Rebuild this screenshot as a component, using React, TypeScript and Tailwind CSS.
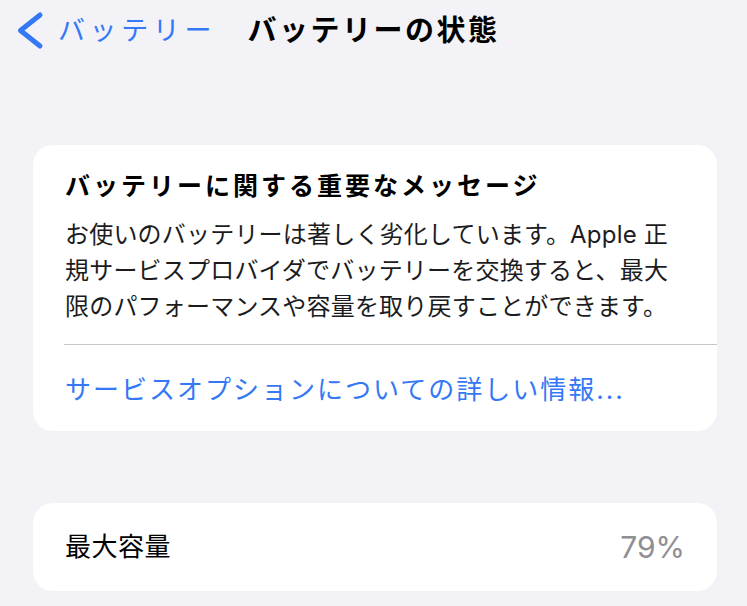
import React from 'react';

const BackChevron: React.FC = () => (
  <svg width="28" height="40" viewBox="0 0 28 40" fill="none" className="shrink-0">
    <path d="M24 5 L4.5 20.5 L24 36" stroke="#3478f6" strokeWidth={5} strokeLinecap="round" strokeLinejoin="round" />
  </svg>
);

const App: React.FC = () => {
  return (
    <div className="min-h-[606px] w-full bg-[#f2f2f7] font-['Inter','Noto_Sans_CJK_JP',sans-serif] text-black">
      {/* Nav bar */}
      <div className="grid h-[60px] grid-cols-[1fr_auto_1fr] items-center">
        <div className="flex items-center pl-4">
          <BackChevron />
          <span className="ml-[14px] whitespace-nowrap text-[27px] leading-none tracking-[4.6px] text-[#3478f6]">
            バッテリー
          </span>
        </div>
        <h1 className="whitespace-nowrap text-[29px] font-bold leading-none tracking-[2.5px]">バッテリーの状態</h1>
        <div />
      </div>

      <div className="flex flex-col pl-[33px] pr-[30px] pt-[85px] pb-[14px]">
        {/* Important message card */}
        <section className="overflow-hidden rounded-[20px] bg-white">
          <div className="pl-[32px] pt-[23px] pb-[19px]">
            <h2 className="whitespace-nowrap text-[25px] font-bold leading-[36px] tracking-[3px]">
              バッテリーに関する重要なメッセージ
            </h2>
            <p className="mt-[13px] whitespace-nowrap text-[24px] leading-[36px] tracking-[0.2px] text-[#1c1c1e]">
              お使いのバッテリーは著しく劣化しています。Apple 正
              <br />
              規サービスプロバイダでバッテリーを交換すると、最大
              <br />
              限のパフォーマンスや容量を取り戻すことができます。
            </p>
          </div>
          <div className="ml-[31px] h-px bg-[#c6c6c8]" />
          <div className="flex h-[86px] items-center pl-[32px] pt-[3px]">
            <span className="whitespace-nowrap text-[26px] leading-none tracking-[2px] text-[#3478f6]">
              サービスオプションについての詳しい情報...
            </span>
          </div>
        </section>

        {/* Maximum capacity */}
        <section className="mt-[72px] flex h-[88px] items-center justify-between rounded-[20px] bg-white pl-[32px] pr-[32px]">
          <span className="whitespace-nowrap text-[26px] leading-none tracking-[0.5px]">最大容量</span>
          <span className="text-[30px] leading-none text-[#8e8e93]">79%</span>
        </section>
      </div>
    </div>
  );
};

export default App;
